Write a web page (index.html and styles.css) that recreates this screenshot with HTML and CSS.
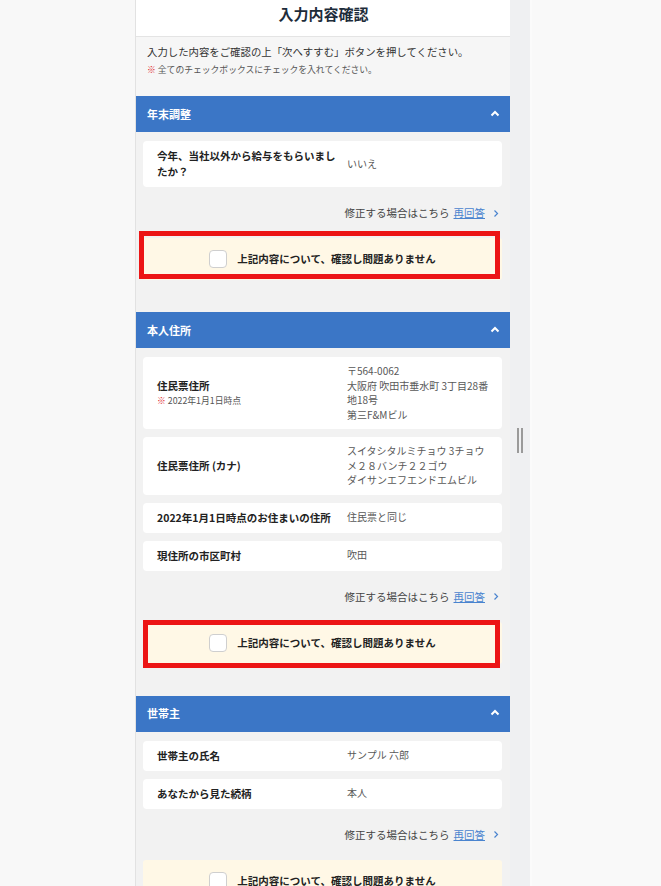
FILE: index.html
```html
<!DOCTYPE html>
<html lang="ja">
<head>
<meta charset="utf-8">
<title>入力内容確認</title>
<link rel="stylesheet" href="styles.css">
</head>
<body>
<div class="page">
  <div class="gutter"></div>
  <main class="app">
    <header class="topbar"><h1>入力内容確認</h1></header>
    <div class="intro">
      <p class="lead">入力した内容をご確認の上「次へすすむ」ボタンを押してください。</p>
      <p class="note"><span class="mark">※</span> 全てのチェックボックスにチェックを入れてください。</p>
    </div>

    <section class="sec">
      <div class="sec-head"><span>年末調整</span>
        <svg class="up" width="10" height="7" viewBox="0 0 10 7"><polyline points="1.5,5.5 5,2 8.5,5.5" fill="none" stroke="#fff" stroke-width="2"/></svg>
      </div>
      <div class="sec-body">
        <div class="card">
          <div class="label">今年、当社以外から給与をもらいまし<br>たか？</div>
          <div class="value">いいえ</div>
        </div>
        <div class="fix">修正する場合はこちら <a href="#">再回答</a>
          <svg class="gt" width="6" height="9" viewBox="0 0 6 9"><polyline points="1.5,1.5 4.5,4.5 1.5,7.5" fill="none" stroke="#4a84cf" stroke-width="1.2"/></svg>
        </div>
        <div class="confirm marked m1"><span class="box"></span><span class="ctext">上記内容について、確認し問題ありません</span></div>
      </div>
    </section>

    <section class="sec">
      <div class="sec-head"><span>本人住所</span>
        <svg class="up" width="10" height="7" viewBox="0 0 10 7"><polyline points="1.5,5.5 5,2 8.5,5.5" fill="none" stroke="#fff" stroke-width="2"/></svg>
      </div>
      <div class="sec-body">
        <div class="card">
          <div class="label">住民票住所<span class="sub"><span class="mark">※</span> 2022年1月1日時点</span></div>
          <div class="value">〒564-0062<br>大阪府 吹田市垂水町 3丁目28番<br>地18号<br>第三F&amp;Mビル</div>
        </div>
        <div class="card">
          <div class="label">住民票住所 (カナ)</div>
          <div class="value">スイタシタルミチョウ 3チョウ<br>メ２８バンチ２２ゴウ<br>ダイサンエフエンドエムビル</div>
        </div>
        <div class="card">
          <div class="label">2022年1月1日時点のお住まいの住所</div>
          <div class="value">住民票と同じ</div>
        </div>
        <div class="card">
          <div class="label">現住所の市区町村</div>
          <div class="value">吹田</div>
        </div>
        <div class="fix">修正する場合はこちら <a href="#">再回答</a>
          <svg class="gt" width="6" height="9" viewBox="0 0 6 9"><polyline points="1.5,1.5 4.5,4.5 1.5,7.5" fill="none" stroke="#4a84cf" stroke-width="1.2"/></svg>
        </div>
        <div class="confirm marked m2"><span class="box"></span><span class="ctext">上記内容について、確認し問題ありません</span></div>
      </div>
    </section>

    <section class="sec">
      <div class="sec-head"><span>世帯主</span>
        <svg class="up" width="10" height="7" viewBox="0 0 10 7"><polyline points="1.5,5.5 5,2 8.5,5.5" fill="none" stroke="#fff" stroke-width="2"/></svg>
      </div>
      <div class="sec-body">
        <div class="card">
          <div class="label">世帯主の氏名</div>
          <div class="value">サンプル 六郎</div>
        </div>
        <div class="card">
          <div class="label">あなたから見た続柄</div>
          <div class="value">本人</div>
        </div>
        <div class="fix">修正する場合はこちら <a href="#">再回答</a>
          <svg class="gt" width="6" height="9" viewBox="0 0 6 9"><polyline points="1.5,1.5 4.5,4.5 1.5,7.5" fill="none" stroke="#4a84cf" stroke-width="1.2"/></svg>
        </div>
        <div class="confirm"><span class="box"></span><span class="ctext">上記内容について、確認し問題ありません</span></div>
      </div>
    </section>
  </main>
  <div class="scroll"><span class="grip"></span></div>
  <div class="rest"></div>
</div>
</body>
</html>
```

FILE: styles.css
```css
html, body {
  margin: 0;
  padding: 0;
  height: 886px;
  overflow: hidden;
}
body {
  background: #f8f8f8;
  font-family: "Noto Sans CJK JP", "Noto Sans", sans-serif;
  color: #222;
}
.page {
  display: grid;
  grid-template-columns: 135px 375px 20px 1fr;
  height: 886px;
}
.gutter { background: #f8f8f8; }
.rest { background: #f9f9f9; border-left: 2px solid #fbfbfb; }
.scroll {
  background: #eff0f2;
  display: flex;
  justify-content: center;
  padding-top: 428px;
}
.grip {
  width: 2px;
  height: 25px;
  border-left: 2px solid #9a9a9a;
  border-right: 2px solid #9a9a9a;
  box-sizing: content-box;
}
.app {
  background: #f2f2f2;
  border-left: 1px solid #e2e2e2;
  overflow: hidden;
}
.topbar {
  background: #fff;
  height: 36px;
  border-bottom: 1px solid #e4e4e4;
  display: flex;
  align-items: center;
  justify-content: center;
}
.topbar h1 {
  margin: 0;
  font-size: 15px;
  font-weight: 700;
  color: #1d2c3a;
  line-height: 20px;
  padding-bottom: 8px;
  padding-left: 1px;
}
.intro {
  background: #f6f6f6;
  padding: 6px 12px 0 11px;
  height: 53px;
}
.lead {
  margin: 0;
  font-size: 10.4px;
  line-height: 18px;
  color: #333;
}
.note {
  margin: 2px 0 0;
  font-size: 8.8px;
  line-height: 14px;
  color: #555;
}
.mark { color: #e0262b; }
.sec-head {
  background: #3b76c6;
  height: 36px;
  display: flex;
  align-items: center;
  justify-content: space-between;
  padding: 0 10px 0 11px;
  color: #fff;
  font-size: 11px;
  font-weight: 700;
}
.sec-head span { padding-bottom: 1px; }
.up { margin-bottom: 2px; }
.sec-body {
  padding: 9px 8px 32px 7px;
  display: flex;
  flex-direction: column;
}
.card {
  background: #fff;
  border-radius: 4px;
  display: flex;
  align-items: center;
  padding: 7px 12px 7px 14px;
  margin-bottom: 8px;
}
.label {
  flex: 0 0 180px;
  margin-right: 10px;
  font-size: 10.5px;
  font-weight: 700;
  line-height: 16px;
  color: #222;
}
.sub {
  display: block;
  font-size: 8.8px;
  font-weight: 400;
  color: #555;
  line-height: 14px;
}
.value {
  flex: 1;
  font-size: 10px;
  line-height: 14.5px;
  color: #585858;
  white-space: nowrap;
}
.fix {
  margin-top: 10px;
  display: flex;
  align-items: center;
  justify-content: flex-end;
  gap: 4px;
  font-size: 10.5px;
  line-height: 16px;
  color: #444;
  padding-right: 3px;
}
.fix a {
  color: #4a84cf;
  text-decoration: underline;
}
.gt { margin-left: 4px; }
.confirm {
  margin-top: 17px;
  height: 42px;
  background: #fff8e6;
  border-radius: 3px;
  display: flex;
  align-items: center;
  justify-content: center;
  gap: 10px;
  position: relative;
}
.marked::after {
  content: "";
  position: absolute;
  border: 5px solid #ec1515;
  pointer-events: none;
}
.m1::after { left: -4px; right: 2px; top: -7px; bottom: 1px; }
.m2::after { left: 0; right: 2px; top: -2px; bottom: -4px; }
.box {
  width: 16px;
  height: 16px;
  background: #fff;
  border: 1px solid #cfcfcf;
  border-radius: 4px;
}
.ctext {
  font-size: 10.5px;
  font-weight: 700;
  color: #222;
  line-height: 16px;
}
```
